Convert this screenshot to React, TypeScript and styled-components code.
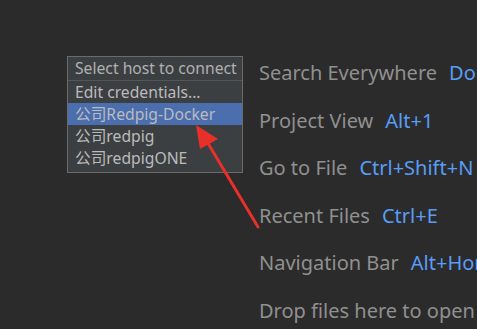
import React from 'react';
import styled, { createGlobalStyle } from 'styled-components';

const GlobalStyle = createGlobalStyle`
  html, body {
    margin: 0;
    padding: 0;
    background: #2b2b2b;
    overflow: hidden;
  }
`;

const Page = styled.div`
  position: relative;
  width: 477px;
  height: 329px;
  background: #2b2b2b;
  font-family: "Noto Sans", "Noto Sans CJK SC", sans-serif;
  overflow: hidden;
`;

const Hints = styled.div`
  display: flex;
  flex-direction: column;
  padding: 49px 0 0 259px;
`;

const HintRow = styled.div`
  height: 47.6px;
  line-height: 47.6px;
  font-size: 20px;
  color: #909090;
  white-space: nowrap;
`;

const Shortcut = styled.span`
  color: #589df6;
  margin-left: 12px;
`;

const Popup = styled.div`
  position: absolute;
  left: 67px;
  top: 56px;
  width: 174px;
  background: #3c3f41;
  border: 1px solid #6b6b6b;
  padding-bottom: 3px;
  font-size: 15.7px;
  color: #bbbbbb;
`;

const PopupHeader = styled.div`
  height: 23px;
  line-height: 23px;
  padding: 0 7px;
  border-bottom: 1px solid #555;
  color: #b0b0b0;
  white-space: nowrap;
  overflow: hidden;
`;

const Item = styled.div<{ $selected?: boolean }>`
  height: 22px;
  line-height: 22px;
  padding: 0 7px;
  white-space: nowrap;
  background: ${p => (p.$selected ? '#4b6eaf' : 'transparent')};
`;

const Arrow = styled.svg`
  position: absolute;
  left: 0;
  top: 0;
`;

const hints = [
  { label: 'Search Everywhere', key: 'Double Shift' },
  { label: 'Project View', key: 'Alt+1' },
  { label: 'Go to File', key: 'Ctrl+Shift+N' },
  { label: 'Recent Files', key: 'Ctrl+E' },
  { label: 'Navigation Bar', key: 'Alt+Home' },
  { label: 'Drop files here to open', key: '' },
];

const hosts = ['Edit credentials...', '公司Redpig-Docker', '公司redpig', '公司redpigONE'];

export default function App() {
  return (
    <Page>
      <GlobalStyle />
      <Hints>
        {hints.map(h => (
          <HintRow key={h.label}>
            {h.label}
            {h.key && <Shortcut>{h.key}</Shortcut>}
          </HintRow>
        ))}
      </Hints>
      <Popup>
        <PopupHeader>Select host to connect</PopupHeader>
        {hosts.map((h, i) => (
          <Item key={h} $selected={i === 1}>{h}</Item>
        ))}
      </Popup>
      <Arrow width="477" height="329" viewBox="0 0 477 329">
        <line x1="258" y1="227" x2="206" y2="140" stroke="#e8302a" strokeWidth="3" strokeLinecap="round" />
        <polygon points="196,125 218,139 200,149" fill="#e8302a" />
      </Arrow>
    </Page>
  );
}
